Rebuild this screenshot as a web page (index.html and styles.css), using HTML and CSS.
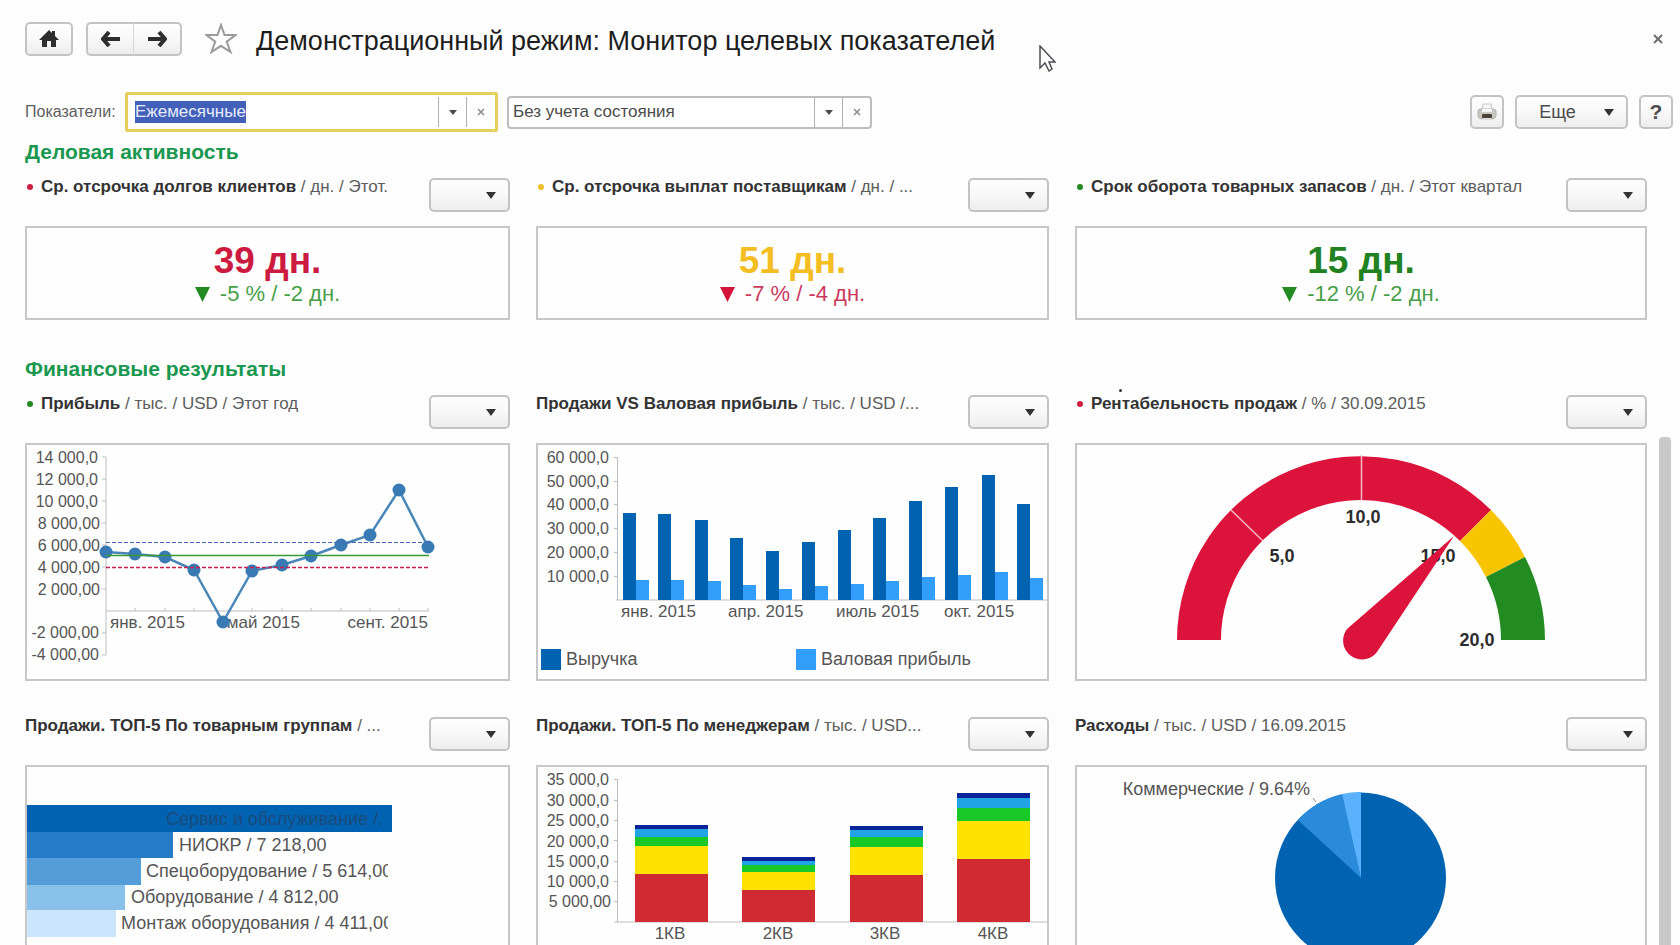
FILE: index.html
```html
<!DOCTYPE html>
<html lang="ru">
<head>
<meta charset="utf-8">
<title>Монитор целевых показателей</title>
<link rel="stylesheet" href="styles.css">
</head>
<body>
<div class="app">
  <header class="topbar">
    <button class="btn btn-home" type="button" aria-label="Домой">
      <svg width="20" height="18" viewBox="0 0 20 18"><path d="M10 0 L13 3 V1 H16 V6 L20 10 H17 V17 H12 V11 H8 V17 H3 V10 H0 Z" fill="#2e2e2e"/></svg>
    </button>
    <div class="nav-pair">
      <button class="btn btn-nav" type="button" aria-label="Назад">
        <svg width="20" height="16" viewBox="0 0 20 16"><path d="M8 1 L2 8 L8 15 M2 8 H19" fill="none" stroke="#2e2e2e" stroke-width="4"/></svg>
      </button>
      <button class="btn btn-nav" type="button" aria-label="Вперед">
        <svg width="20" height="16" viewBox="0 0 20 16"><path d="M12 1 L18 8 L12 15 M18 8 H1" fill="none" stroke="#2e2e2e" stroke-width="4"/></svg>
      </button>
    </div>
    <button class="plain star" type="button" aria-label="В избранное">
      <svg width="32" height="32" viewBox="0 0 32 32"><path d="M16 2 L19.500 12 H30.500 L21.700 18.600 L25.500 29 L16 22.800 L6.500 29 L10.300 18.600 L1.500 12 H12.500 Z" fill="#fff" stroke="#9b9b9b" stroke-width="2"/></svg>
    </button>
    <h1 class="title">Демонстрационный режим: Монитор целевых показателей</h1>
    <button class="plain close" type="button" aria-label="Закрыть">
      <svg width="10" height="10" viewBox="0 0 10 10"><path d="M1 1 L9 9 M9 1 L1 9" stroke="#6c6c6c" stroke-width="2"/></svg>
    </button>
  </header>

  <div class="toolbar">
    <label class="label" for="period">Показатели:</label>
    <div class="combo combo-active">
      <div class="combo-text"><input id="period" class="input input-selected" type="text" size="10" value="Ежемесячные"></div>
      <button class="combo-btn" type="button" aria-label="Выбрать показатели"><svg width="8" height="5" viewBox="0 0 8 5"><path d="M0 0 H8 L4 5 Z" fill="#4a4a4a"/></svg></button>
      <button class="combo-btn" type="button" aria-label="Очистить показатели"><svg width="8" height="8" viewBox="0 0 8 8"><path d="M1 1 L7 7 M7 1 L1 7" stroke="#8a8a8a" stroke-width="1.500"/></svg></button>
    </div>
    <div class="combo combo-state">
      <div class="combo-text"><input class="input" type="text" aria-label="Состояние" value="Без учета состояния"></div>
      <button class="combo-btn" type="button" aria-label="Выбрать состояние"><svg width="8" height="5" viewBox="0 0 8 5"><path d="M0 0 H8 L4 5 Z" fill="#4a4a4a"/></svg></button>
      <button class="combo-btn" type="button" aria-label="Очистить состояние"><svg width="8" height="8" viewBox="0 0 8 8"><path d="M1 1 L7 7 M7 1 L1 7" stroke="#8a8a8a" stroke-width="1.500"/></svg></button>
    </div>
    <div class="actions">
      <button class="btn btn-square" type="button" aria-label="Печать">
        <svg width="20" height="18" viewBox="0 0 20 18"><path d="M5 8 L6 1 H14 L15 8 Z" fill="#f7f7f7" stroke="#c5c5c5"/><path d="M1 8 Q1 6 4 6 H16 Q19 6 19 8 V13 Q18 16 15 16 H5 Q2 16 1 13 Z" fill="#c9c6c2" stroke="#b4b0ac"/><path d="M5 6 H15 V9 H5 Z" fill="#f4f4f4"/><rect x="5" y="11" width="10" height="4" rx="1" fill="#4b4139"/><path d="M6 16 H14" stroke="#ddd" stroke-width="2"/></svg>
      </button>
      <button class="btn btn-more" type="button"><span>Еще</span><svg width="10" height="7" viewBox="0 0 10 7"><path d="M0 0 H10 L5 7 Z" fill="#333"/></svg></button>
      <button class="btn btn-square btn-help" type="button">?</button>
    </div>
  </div>

  <main class="dashboard">
    <div class="content">
      <h2 class="section">Деловая активность</h2>
      <div class="grid">
        <article class="card">
          <div class="card-head">
            <h3 class="name"><i class="dot red"></i><b>Ср. отсрочка долгов клиентов</b> / дн. / Этот.</h3>
            <button class="btn btn-menu" type="button" aria-label="Меню показателя"><svg width="10" height="7" viewBox="0 0 10 7"><path d="M0 0 H10 L5 7 Z" fill="#333"/></svg></button>
          </div>
          <div class="panel kpi">
            <p class="value text-red">39 дн.</p>
            <p class="delta text-green"><svg width="15" height="15" viewBox="0 0 15 15"><path d="M0 0 H15 L7.500 15 Z" fill="#228b22"/></svg>-5 % / -2 дн.</p>
          </div>
        </article>
        <article class="card">
          <div class="card-head">
            <h3 class="name"><i class="dot yellow"></i><b>Ср. отсрочка выплат поставщикам</b> / дн. / ...</h3>
            <button class="btn btn-menu" type="button" aria-label="Меню показателя"><svg width="10" height="7" viewBox="0 0 10 7"><path d="M0 0 H10 L5 7 Z" fill="#333"/></svg></button>
          </div>
          <div class="panel kpi">
            <p class="value text-yellow">51 дн.</p>
            <p class="delta text-rose"><svg width="15" height="15" viewBox="0 0 15 15"><path d="M0 0 H15 L7.500 15 Z" fill="#d2143a"/></svg>-7 % / -4 дн.</p>
          </div>
        </article>
        <article class="card">
          <div class="card-head">
            <h3 class="name"><i class="dot green"></i><b>Срок оборота товарных запасов</b> / дн. / Этот квартал</h3>
            <button class="btn btn-menu" type="button" aria-label="Меню показателя"><svg width="10" height="7" viewBox="0 0 10 7"><path d="M0 0 H10 L5 7 Z" fill="#333"/></svg></button>
          </div>
          <div class="panel kpi">
            <p class="value text-deep">15 дн.</p>
            <p class="delta text-green"><svg width="15" height="15" viewBox="0 0 15 15"><path d="M0 0 H15 L7.500 15 Z" fill="#228b22"/></svg>-12 % / -2 дн.</p>
          </div>
        </article>
      </div>

      <h2 class="section section-next">Финансовые результаты</h2>
      <div class="grid">
        <article class="card">
          <div class="card-head">
            <h3 class="name"><i class="dot green"></i><b>Прибыль</b> / тыс. / USD / Этот год</h3>
            <button class="btn btn-menu" type="button" aria-label="Меню показателя"><svg width="10" height="7" viewBox="0 0 10 7"><path d="M0 0 H10 L5 7 Z" fill="#333"/></svg></button>
          </div>
          <div class="panel">
            <svg class="chart" viewBox="27 445 481 234" role="img" aria-label="Прибыль по месяцам">
              <path d="M106 457 V655 M106 611 H429 M102 457 H106 M102 479 H106 M102 501 H106 M102 523 H106 M102 545 H106 M102 567 H106 M102 589 H106 M102 633 H106 M102 655 H106 M135 608 V611 M165 608 V611 M194 608 V611 M252 608 V611 M282 608 V611 M311 608 V611 M341 608 V611 M370 608 V611 M399 608 V611 M428 608 V611" stroke="#bdbdbd" fill="none"/>
              <g text-anchor="end">
                <text x="98" y="463">14 000,0</text><text x="98" y="485">12 000,0</text><text x="98" y="507">10 000,0</text>
                <text x="100" y="529">8 000,00</text><text x="100" y="551">6 000,00</text><text x="100" y="573">4 000,00</text><text x="100" y="595">2 000,00</text>
                <text x="99" y="638">-2 000,00</text><text x="99" y="660">-4 000,00</text>
              </g>
              <g class="month">
                <text x="110" y="628">янв. 2015</text>
                <text x="300" y="628" text-anchor="end">май 2015</text>
                <text x="428" y="628" text-anchor="end">сент. 2015</text>
              </g>
              <polyline points="106,552 135,554 165,557 194,570 223,622 252,571 282,565 311,556 341,545 370,535 399,490 428,547" fill="none" stroke="#4a86b8" stroke-width="2.500"/>
              <g fill="#3a7ab4">
                <circle cx="106" cy="552" r="6.500"/><circle cx="135" cy="554" r="6.500"/><circle cx="165" cy="557" r="6.500"/><circle cx="194" cy="570" r="6.500"/><circle cx="223" cy="622" r="6.500"/><circle cx="252" cy="571" r="6.500"/><circle cx="282" cy="565" r="6.500"/><circle cx="311" cy="556" r="6.500"/><circle cx="341" cy="545" r="6.500"/><circle cx="370" cy="535" r="6.500"/><circle cx="399" cy="490" r="6.500"/><circle cx="428" cy="547" r="6.500"/>
              </g>
              <path d="M106 542.500 H429" stroke="#4668b4" stroke-dasharray="4 2"/>
              <path d="M106 555.500 H429" stroke="#379a37" stroke-width="1.500"/>
              <path d="M106 567.500 H429" stroke="#c8204c" stroke-width="1.500" stroke-dasharray="4 2"/>
            </svg>
          </div>
        </article>
        <article class="card">
          <div class="card-head">
            <h3 class="name"><b>Продажи VS Валовая прибыль</b> / тыс. / USD /...</h3>
            <button class="btn btn-menu" type="button" aria-label="Меню показателя"><svg width="10" height="7" viewBox="0 0 10 7"><path d="M0 0 H10 L5 7 Z" fill="#333"/></svg></button>
          </div>
          <div class="panel">
            <svg class="chart" viewBox="538 445 509 234" role="img" aria-label="Продажи и валовая прибыль">
              <path d="M617.500 457 V600 M616 600 H1047 M614 457.500 H617 M614 481.500 H617 M614 504.500 H617 M614 528.500 H617 M614 552.500 H617 M614 576.500 H617" stroke="#bdbdbd" fill="none"/>
              <g text-anchor="end">
                <text x="609" y="463">60 000,0</text><text x="609" y="487">50 000,0</text><text x="609" y="510">40 000,0</text><text x="609" y="534">30 000,0</text><text x="609" y="558">20 000,0</text><text x="609" y="582">10 000,0</text>
              </g>
              <path fill="#0063b1" d="M623 513h13v87h-13z M658 514h13v86h-13z M695 520h13v80h-13z M730 538h13v62h-13z M766 551h13v49h-13z M802 542h13v58h-13z M838 530h13v70h-13z M873 518h13v82h-13z M909 501h13v99h-13z M945 487h13v113h-13z M982 475h13v125h-13z M1017 504h13v96h-13z"/>
              <path fill="#339efa" d="M636 580h13v20h-13z M671 580h13v20h-13z M708 581h13v19h-13z M743 585h13v15h-13z M779 589h13v11h-13z M815 586h13v14h-13z M851 584h13v16h-13z M886 581h13v19h-13z M922 577h13v23h-13z M958 575h13v25h-13z M995 572h13v28h-13z M1030 578h13v22h-13z"/>
              <g class="month"><text x="621" y="617">янв. 2015</text><text x="728" y="617">апр. 2015</text><text x="836" y="617">июль 2015</text><text x="944" y="617">окт. 2015</text></g>
              <rect x="541" y="649" width="20" height="21" fill="#0063b1"/><text class="big" x="566" y="665">Выручка</text>
              <rect x="796" y="649" width="20" height="21" fill="#339efa"/><text class="big" x="821" y="665">Валовая прибыль</text>
            </svg>
          </div>
        </article>
        <article class="card">
          <div class="card-head">
            <h3 class="name"><i class="dot red"></i><b>Рентабельность продаж</b> / % / 30.09.2015<i class="speck"></i></h3>
            <button class="btn btn-menu" type="button" aria-label="Меню показателя"><svg width="10" height="7" viewBox="0 0 10 7"><path d="M0 0 H10 L5 7 Z" fill="#333"/></svg></button>
          </div>
          <div class="panel">
            <svg class="chart" viewBox="1077 445 568 234" role="img" aria-label="Рентабельность продаж">
              <path d="M1177 640 A184 184 0 0 1 1491 510 L1460 541 A140 140 0 0 0 1221 640 Z" fill="#dc143c"/>
              <path d="M1491 510 A184 184 0 0 1 1525 557 L1486 577 A140 140 0 0 0 1460 541 Z" fill="#f9c400"/>
              <path d="M1525 557 A184 184 0 0 1 1545 640 H1501 A140 140 0 0 0 1486 577 Z" fill="#228b22"/>
              <path d="M1361.500 455 V501 M1231 510 L1263 541" stroke="#f6b9c5" stroke-width="1.500"/>
              <g class="bold" text-anchor="middle"><text x="1363" y="523">10,0</text><text x="1282" y="562">5,0</text><text x="1438" y="562">15,0</text><text x="1477" y="646">20,0</text></g>
              <path d="M1454 536 L1347 629 A18.500 18.500 0 1 0 1377 652 Z" fill="#dc143c"/>
            </svg>
          </div>
        </article>
      </div>

      <div class="grid grid-next">
        <article class="card">
          <div class="card-head">
            <h3 class="name"><b>Продажи. ТОП-5 По товарным группам</b> / ...</h3>
            <button class="btn btn-menu" type="button" aria-label="Меню показателя"><svg width="10" height="7" viewBox="0 0 10 7"><path d="M0 0 H10 L5 7 Z" fill="#333"/></svg></button>
          </div>
          <div class="panel">
            <svg class="chart" viewBox="27 767 481 234" role="img" aria-label="Топ товарных групп">
              <clipPath id="labels"><rect x="27" y="767" width="361" height="234"/></clipPath>
              <path fill="#0063b1" d="M27 805H392V832H27z"/><path fill="#267cc6" d="M27 832H173V858H27z"/><path fill="#559dd9" d="M27 858H141V885H27z"/><path fill="#89c0ea" d="M27 885H125V910H27z"/><path fill="#cbe6fc" d="M27 910H116V937H27z"/>
              <g class="big" clip-path="url(#labels)">
                <text class="on-bar" x="166" y="825">Сервис и обслуживание /.</text>
                <text x="179" y="851">НИОКР / 7 218,00</text>
                <text x="146" y="877">Спецоборудование / 5 614,00</text>
                <text x="131" y="903">Оборудование / 4 812,00</text>
                <text x="121" y="929">Монтаж оборудования / 4 411,00</text>
              </g>
            </svg>
          </div>
        </article>
        <article class="card">
          <div class="card-head">
            <h3 class="name"><b>Продажи. ТОП-5 По менеджерам</b> / тыс. / USD...</h3>
            <button class="btn btn-menu" type="button" aria-label="Меню показателя"><svg width="10" height="7" viewBox="0 0 10 7"><path d="M0 0 H10 L5 7 Z" fill="#333"/></svg></button>
          </div>
          <div class="panel">
            <svg class="chart" viewBox="538 767 509 234" role="img" aria-label="Топ менеджеров по кварталам">
              <path d="M617.500 779 V922 M614 922 H1047 M614 779.500 H617 M614 800.500 H617 M614 820.500 H617 M614 840.500 H617 M614 861.500 H617 M614 881.500 H617 M614 901.500 H617" stroke="#bdbdbd" fill="none"/>
              <g text-anchor="end">
                <text x="609" y="785">35 000,0</text><text x="609" y="806">30 000,0</text><text x="609" y="826">25 000,0</text><text x="609" y="847">20 000,0</text><text x="609" y="867">15 000,0</text><text x="609" y="887">10 000,0</text><text x="611" y="907">5 000,00</text>
              </g>
              <path fill="#0a2399" d="M635 825h73v4h-73z M742 857h73v4h-73z M850 826h73v4h-73z M957 793h73v5h-73z"/>
              <path fill="#20a4e6" d="M635 829h73v8h-73z M742 861h73v4h-73z M850 830h73v7h-73z M957 798h73v10h-73z"/>
              <path fill="#18c826" d="M635 837h73v9h-73z M742 865h73v7h-73z M850 837h73v10h-73z M957 808h73v13h-73z"/>
              <path fill="#ffe200" d="M635 846h73v28h-73z M742 872h73v18h-73z M850 847h73v28h-73z M957 821h73v38h-73z"/>
              <path fill="#d02a32" d="M635 874h73v48h-73z M742 890h73v32h-73z M850 875h73v47h-73z M957 859h73v63h-73z"/>
              <g class="month" text-anchor="middle"><text x="670" y="939">1КВ</text><text x="778" y="939">2КВ</text><text x="885" y="939">3КВ</text><text x="993" y="939">4КВ</text></g>
            </svg>
          </div>
        </article>
        <article class="card">
          <div class="card-head">
            <h3 class="name"><b>Расходы</b> / тыс. / USD / 16.09.2015</h3>
            <button class="btn btn-menu" type="button" aria-label="Меню показателя"><svg width="10" height="7" viewBox="0 0 10 7"><path d="M0 0 H10 L5 7 Z" fill="#333"/></svg></button>
          </div>
          <div class="panel">
            <svg class="chart" viewBox="1077 767 568 234" role="img" aria-label="Структура расходов">
              <circle cx="1360.500" cy="878" r="85.500" fill="#0063b1"/>
              <path d="M1361 878 L1298 820 A86 86 0 0 1 1342 794 Z" fill="#2a8bdb"/>
              <path d="M1361 878 L1342 794 A86 86 0 0 1 1361 792 Z" fill="#5cb1fd"/>
              <path d="M1313 798 L1316 802" stroke="#8a8a8a"/>
              <text class="big" x="1310" y="795" text-anchor="end">Коммерческие / 9.64%</text>
            </svg>
          </div>
        </article>
      </div>
    </div>
    <div class="scroll"><div class="scroll-up"></div><div class="scroll-thumb"></div></div>
  </main>
</div>
<svg class="cursor" width="18" height="28" viewBox="0 0 18 28"><path d="M2 1 V23 L7 18 L11 26 L14 24 L11 17 H17 Z" fill="#fff" stroke="#4d4d55" stroke-width="1.500"/></svg>
</body>
</html>
```
FILE: styles.css
```css
* { box-sizing: border-box; }
body {
  margin: 0;
  background: #fdfdfd;
  color: #4c4c4c;
  font: 16px/20px "Liberation Sans", Arial, sans-serif;
}
h1, h2, h3, p { margin: 0; font-weight: normal; }
button, input { font: inherit; color: inherit; margin: 0; }
svg { display: block; flex: none; }

.app { height: 100vh; display: flex; flex-direction: column; overflow: hidden; }

.btn {
  display: flex;
  align-items: center;
  justify-content: center;
  height: 34px;
  padding: 0;
  border: 2px solid #c3c3c3;
  border-radius: 5px;
  background: linear-gradient(#fefefe, #f8f8f8 50%, #ededed);
}
.plain { border: 0; padding: 0; background: none; }

.topbar { display: flex; align-items: center; height: 34px; margin: 22px 17px 36px 25px; }
.btn-home { width: 48px; margin-right: 13px; }
.nav-pair { display: flex; }
.btn-nav { width: 48px; }
.btn-nav:first-child { border-right: 1px solid #d6d6d6; border-radius: 5px 0 0 5px; }
.btn-nav:last-child { border-left: 0; border-radius: 0 5px 5px 0; }
.star { margin: 0 19px 0 23px; }
.title { flex: 1; font-size: 27px; line-height: 34px; padding-top: 3px; color: #1d1d1d; white-space: nowrap; }

.toolbar { display: flex; align-items: center; height: 40px; margin: 0 7px 8px 25px; flex: none; }
.label { width: 100px; white-space: nowrap; color: #5f5f5f; }
.combo { display: flex; align-items: stretch; border: 2px solid #bdbdbd; border-radius: 4px; background: #fff; font-size: 17px; }
.combo-active { width: 373px; height: 40px; padding: 2px 1px; border: 3px solid #e6cf5c; border-radius: 2px; }
.combo-state { width: 365px; height: 33px; margin-left: 9px; }
.combo-text { flex: 1; display: flex; align-items: center; min-width: 0; padding-left: 4px; }
.combo-active .combo-text { padding-left: 6px; }
.input { width: 100%; height: 22px; padding: 0; border: 0; outline: 0; background: none; }
.input-selected { width: auto; field-sizing: content; background: #4360b8; color: #e6ecff; }
.combo-btn {
  width: 28px;
  display: flex;
  align-items: center;
  justify-content: center;
  padding: 0;
  border: 0;
  border-left: 1px solid #b0b0b0;
  background: none;
}
.actions { display: flex; gap: 11px; margin-left: auto; }
.btn-square { width: 34px; }
.btn-more { width: 113px; gap: 28px; padding-left: 10px; font-size: 18px; }
.btn-help { font-size: 21px; font-weight: bold; color: #4c4c4c; }

.dashboard { flex: 1; min-height: 0; display: flex; overflow: hidden; }
.content { flex: 1; min-width: 0; padding: 0 12px 0 25px; }
.section { font-size: 21px; line-height: 24px; font-weight: bold; color: #1a9850; margin-bottom: 14px; }
.section-next { margin-top: 37px; }
.grid { display: grid; grid-template-columns: 485fr 513fr 572fr; column-gap: 26px; }
.grid-next { margin-top: 36px; }
.card { min-width: 0; }
.card-head { display: flex; justify-content: space-between; height: 34px; margin-bottom: 14px; }
.name { position: relative; font-size: 17px; line-height: 18px; white-space: nowrap; color: #5c5c5c; }
.name b { color: #333; }
.btn-menu { width: 81px; flex: none; justify-content: flex-end; padding-right: 12px; }
.dot { display: inline-block; width: 6px; height: 6px; margin: 0 8px 2px 2px; border-radius: 50%; }
.red { background: #cf1b42; }
.yellow { background: #efc02c; }
.green { background: #228b22; }
.speck { position: absolute; left: 44px; top: -6px; width: 3px; height: 3px; border-radius: 50%; background: #333; }

.panel { border: 2px solid #c7c7c7; background: #fefefe; }
.kpi { display: flex; flex-direction: column; align-items: center; padding: 13px 0 11px; }
.value { font-size: 37px; line-height: 40px; font-weight: bold; }
.delta { display: flex; align-items: center; gap: 10px; font-size: 22px; line-height: 26px; }
.text-red { color: #cc1a40; }
.text-yellow { color: #f4bd22; }
.text-deep { color: #228222; }
.text-green { color: #479f47; }
.text-rose { color: #cb3a5c; }

.chart { width: 100%; height: auto; font-size: 16px; }
.chart text { fill: #555; }
.chart .month { font-size: 17px; }
.chart .big { font-size: 18px; }
.chart .on-bar { fill: #1c4a7c; }
.chart .bold { font-size: 18px; font-weight: bold; }
.chart .bold text { fill: #2c2c2c; }

.scroll { width: 21px; display: flex; flex-direction: column; padding-right: 9px; }
.scroll-up { height: 297px; flex: none; }
.scroll-thumb { flex: 1; border-radius: 4px 4px 0 0; background: #c9c9c9; }

.cursor { position: absolute; left: 1038px; top: 45px; }
```
